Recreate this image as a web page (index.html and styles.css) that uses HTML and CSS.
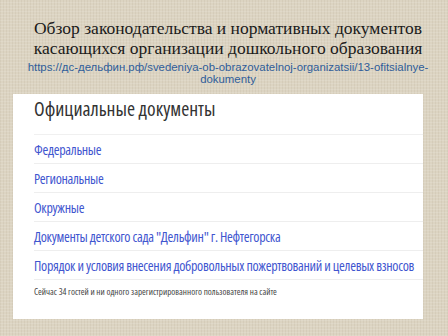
FILE: index.html
```html
<!DOCTYPE html>
<html lang="ru">
<head>
    <meta charset="UTF-8">
    <title>Официальные документы</title>
    <link rel="stylesheet" href="styles.css">
</head>
<body>
    <div class="slide">
        <div class="header">
            <h1>Обзор законодательства и нормативных документов<br>касающихся организации дошкольного образования</h1>
            <a class="source" href="#">https://дс-дельфин.рф/svedeniya-ob-obrazovatelnoj-organizatsii/13-ofitsialnye-<br>dokumenty</a>
        </div>

        <div class="panel">
            <h2>Официальные документы</h2>
            <ul class="doc-list">
                <li><a href="#">Федеральные</a></li>
                <li><a href="#">Региональные</a></li>
                <li><a href="#">Окружные</a></li>
                <li><a href="#">Документы детского сада "Дельфин" г. Нефтегорска</a></li>
                <li><a href="#">Порядок и условия внесения добровольных пожертвований и целевых взносов</a></li>
            </ul>
            <p class="online">Сейчас 34 гостей и ни одного зарегистрированного пользователя на сайте</p>
        </div>
    </div>
</body>
</html>
```

FILE: styles.css
```css
body {
    margin: 0;
    background-color: #dcd4c2;
}
.slide {
    width: 448px;
    height: 336px;
    overflow: hidden;
    background-color: #dcd4c2;
    background-image:
        repeating-linear-gradient(0deg, rgba(255,255,255,0.12) 0 1px, transparent 1px 3px),
        repeating-linear-gradient(90deg, rgba(120,100,70,0.07) 0 1px, transparent 1px 3px);
}
.header {
    padding: 18px 0 0 8px;
    height: 76px;
    text-align: center;
}
.header h1 {
    margin: 0;
    font-family: "Liberation Serif", "DejaVu Serif", serif;
    font-weight: normal;
    font-size: 17.5px;
    line-height: 20px;
    color: #1a1a1a;
}
.source {
    display: block;
    margin-top: 3px;
    font-family: "Liberation Sans", sans-serif;
    font-size: 11.4px;
    line-height: 12px;
    color: #2f5d9a;
    text-decoration: none;
}
.panel {
    margin-left: 13px;
    width: 389px;
    height: 225px;
    padding-left: 21px;
    background: white;
    font-family: "Open Sans", sans-serif;
    font-stretch: 75%;
}
.panel h2 {
    margin: 0;
    padding-top: 2px;
    height: 38px;
    font-size: 19.5px;
    font-weight: normal;
    line-height: 26px;
    color: #333;
    border-bottom: 1px solid #f0f0f0;
}
.doc-list {
    list-style: none;
    margin: 0;
    padding: 0;
}
.doc-list li {
    height: 28px;
    line-height: 28px;
    border-bottom: 1px solid #eee;
}
.doc-list a {
    font-size: 14px;
    letter-spacing: -0.3px;
    color: #3f56cf;
    text-decoration: none;
    white-space: nowrap;
}
.online {
    margin: 5px 0 0;
    font-size: 9.1px;
    color: #444;
}
```
